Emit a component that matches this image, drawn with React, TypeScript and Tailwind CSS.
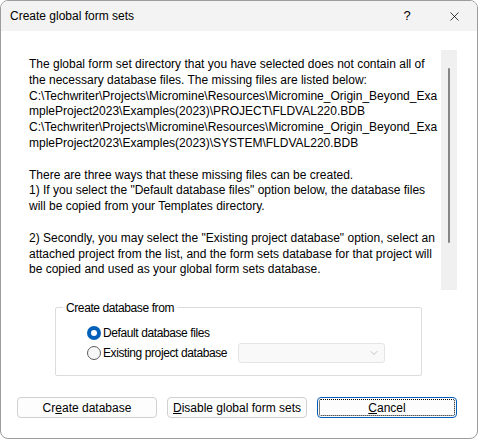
import { ChevronDown, X } from "lucide-react";

const MESSAGE_LINES = [
  "The global form set directory that you have selected does not contain all of",
  "the necessary database files. The missing files are listed below:",
  "C:\\Techwriter\\Projects\\Micromine\\Resources\\Micromine_Origin_Beyond_Exa",
  "mpleProject2023\\Examples(2023)\\PROJECT\\FLDVAL220.BDB",
  "C:\\Techwriter\\Projects\\Micromine\\Resources\\Micromine_Origin_Beyond_Exa",
  "mpleProject2023\\Examples(2023)\\SYSTEM\\FLDVAL220.BDB",
  "",
  "There are three ways that these missing files can be created.",
  '1) If you select the "Default database files" option below, the database files',
  "will be copied from your Templates directory.",
  "",
  '2) Secondly, you may select the "Existing project database" option, select an',
  "attached project from the list, and the form sets database for that project will",
  "be copied and used as your global form sets database.",
];

function Radio({ checked, label }: { checked?: boolean; label: string }) {
  return (
    <div className="flex items-center h-[20px] whitespace-nowrap">
      {checked ? (
        <span className="shrink-0 w-[14px] h-[14px] rounded-full bg-[#005fb8] flex items-center justify-center">
          <span className="w-[6px] h-[6px] rounded-full bg-white" />
        </span>
      ) : (
        <span className="shrink-0 w-[14px] h-[14px] rounded-full border border-[#5c5c5c] bg-[#f7f7f7]" />
      )}
      <span className="ml-[2px] tracking-[-0.4px]">{label}</span>
    </div>
  );
}

function Button({
  children,
  focused,
}: {
  children: React.ReactNode;
  focused?: boolean;
}) {
  return (
    <button
      className={`relative w-[140px] h-[21px] rounded-[4px] bg-[#fdfdfd] text-black flex items-center justify-center border ${
        focused ? "border-[#005fb8]" : "border-[#d0d0d0]"
      }`}
    >
      {focused && (
        <span className="absolute inset-[1px] border border-dotted border-black rounded-[2px]" />
      )}
      {children}
    </button>
  );
}

export default function App() {
  return (
    <div
      className="w-[478px] h-[439px] border border-[#9c9c9c] rounded-[8px] overflow-hidden bg-white flex flex-col text-[12px] text-black"
      style={{ fontFamily: '"Liberation Sans", Arial, sans-serif' }}
    >
      {/* Title bar */}
      <div className="h-[30px] shrink-0 bg-[#f3f3f3] flex items-center pl-[9px]">
        <span className="flex-1">Create global form sets</span>
        <span className="w-[46px] text-center text-[13px] mr-[1px]">?</span>
        <span className="w-[46px] flex justify-center">
          <X size={15} strokeWidth={1.2} />
        </span>
      </div>

      {/* Message with scrollbar */}
      <div className="mt-[19px] h-[240px] flex">
        <div className="w-[440px] pl-[28px] pt-[7px] leading-[15.8px] overflow-hidden">
          {MESSAGE_LINES.map((line, i) => (
            <div key={i} className="whitespace-nowrap h-[15.8px]">
              {line}
            </div>
          ))}
        </div>
        <div className="w-[16px] bg-[#f0f0f0] flex justify-center">
          <div className="mt-[18px] w-[2px] h-[175px] bg-[#858585] rounded-full" />
        </div>
      </div>

      {/* Group box */}
      <div className="relative mt-[17px] ml-[54px] w-[367px] h-[69px] border border-[#dcdcdc] rounded-[2px] pt-[15px] pl-[31px]">
        <span className="absolute -top-[9px] left-[7px] px-[3px] bg-white tracking-[-0.4px]">
          Create database from
        </span>
        <Radio checked label="Default database files" />
        <div className="flex items-center">
          <div className="w-[151px] shrink-0">
            <Radio label="Existing project database" />
          </div>
          <div className="w-[147px] h-[20px] rounded-[3px] border border-[#e5e5e5] bg-[#f9f9f9] flex items-center justify-end pr-[4px]">
            <ChevronDown size={12} strokeWidth={1.2} className="text-[#a0a0a0]" />
          </div>
        </div>
      </div>

      {/* Buttons */}
      <div className="mt-[21px] pl-[16px] flex gap-[10px]">
        <Button>
          Cr<u>e</u>ate database
        </Button>
        <Button>
          <u>D</u>isable global form sets
        </Button>
        <Button focused>
          <u>C</u>ancel
        </Button>
      </div>
    </div>
  );
}
